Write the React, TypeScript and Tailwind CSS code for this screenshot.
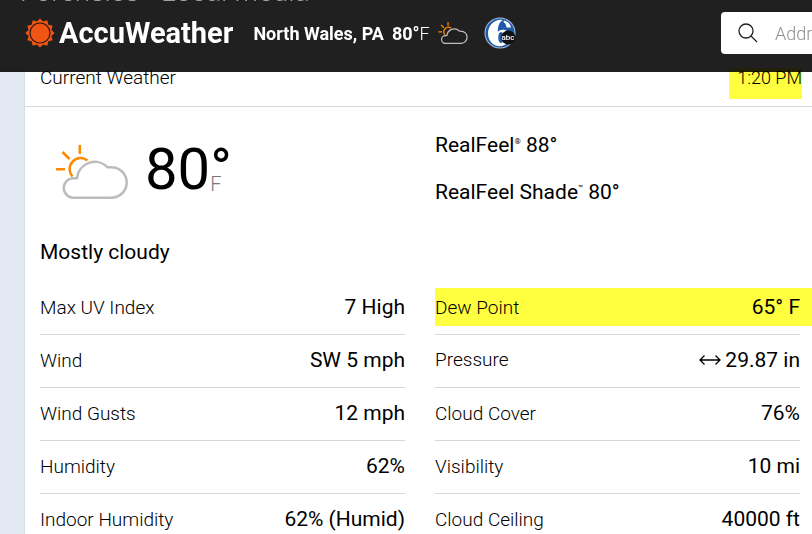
import React from "react";

interface Detail {
  label: string;
  value: string;
  trend?: boolean;
  marked?: boolean;
}

const leftDetails: Detail[] = [
  { label: "Max UV Index", value: "7 High" },
  { label: "Wind", value: "SW 5 mph" },
  { label: "Wind Gusts", value: "12 mph" },
  { label: "Humidity", value: "62%" },
  { label: "Indoor Humidity", value: "62% (Humid)" },
];

const rightDetails: Detail[] = [
  { label: "Dew Point", value: "65° F", marked: true },
  { label: "Pressure", value: "29.87 in", trend: true },
  { label: "Cloud Cover", value: "76%" },
  { label: "Visibility", value: "10 mi" },
  { label: "Cloud Ceiling", value: "40000 ft" },
];

function SunLogo() {
  // twelve points around the disc
  const points = Array.from({ length: 24 }, (_, i) => {
    const r = i % 2 === 0 ? 14.6 : 11.8;
    const a = (i * Math.PI) / 12;
    return `${(15 + r * Math.sin(a)).toFixed(2)},${(15 - r * Math.cos(a)).toFixed(2)}`;
  }).join(" ");
  return (
    <svg viewBox="0 0 30 30" className="size-[30px] shrink-0">
      <polygon points={points} fill="#f05514" />
      <circle cx="15" cy="15" r="10" fill="none" stroke="#2a1a14" strokeWidth="1.2" />
    </svg>
  );
}

function CloudSun({ className, cloud, stroke }: { className: string; cloud: string; stroke: number }) {
  return (
    <svg viewBox="0 0 74 54" className={className} fill="none" strokeWidth={stroke} strokeLinejoin="round">
      <g stroke="#ff8a00">
        <path d="M24.8 0v9M7.500 7l7 7M1 24.300h9" />
        <path d="M17.500 31.500A11 11 0 0 1 32.500 15.500" />
      </g>
      <path
        d="M18.500 52.700H56.500A15.200 15.200 0 0 0 56.500 22.300Q55 22 52.800 22.300A18 18 0 0 0 22 33.300H18.500A9.700 9.700 0 0 0 18.500 52.700Z"
        stroke={cloud}
      />
    </svg>
  );
}

function StationLogo() {
  return (
    <svg viewBox="0 0 32 32" className="size-8 shrink-0">
      <circle cx="16" cy="16" r="15.500" fill="#a9bbd4" />
      <circle cx="16" cy="16" r="14.500" fill="#2059a8" />
      <path
        d="M17 2.800C9 3 4 9.500 4 16.500C4 24 9.500 29.300 16 29.200C21 29.100 25 26 25.500 20C25.800 15 22 12.500 18.500 12.700C16.500 12.800 15 13.500 13.800 14.800C13.800 9.500 15 5 19 3Z"
        fill="#fff"
      />
      <path
        d="M20 3.500C24 4.500 26.500 7 27 10.500L22.500 10.500C22.300 8 21.500 6 19.500 5.200Z"
        fill="#fff"
      />
      <ellipse cx="17" cy="20.500" rx="2.700" ry="5.500" fill="#2059a8" />
      <circle cx="24.300" cy="20.500" r="7" fill="#111" />
      <text x="24" y="23.200" textAnchor="middle" fontSize="8" fontWeight="500" fill="#fff">
        abc
      </text>
    </svg>
  );
}

function DetailList({ items }: { items: Detail[] }) {
  return (
    <dl className="flex-1">
      {items.map((item) => (
        <div
          key={item.label}
          className="relative flex h-[53px] items-baseline justify-between border-b border-[#d8d8d8] pt-[7px] leading-9"
        >
          {item.marked && <span className="absolute top-[6px] left-0 -right-3 h-[38px] bg-[#ffff40]" />}
          <dt className="relative text-[19px] font-light">{item.label}</dt>
          <dd className="relative flex items-center gap-1 text-[21px]">
            {item.trend && (
              <svg viewBox="0 0 22 12" className="w-[22px]" fill="none" stroke="#000" strokeWidth="1.300">
                <path d="M1 6h20M5.500 1.500L1 6l4.500 4.500M16.500 1.500L21 6l-4.500 4.500" />
              </svg>
            )}
            {item.value}
          </dd>
        </div>
      ))}
    </dl>
  );
}

export default function App() {
  return (
    <div className="h-screen overflow-hidden bg-white font-['Roboto',sans-serif] text-black">
      <header className="fixed inset-x-0 top-0 z-10 h-[72px] bg-black/[0.875]">
        <div className="h-1 overflow-hidden">
          <p className="-mt-[22px] pl-5 text-[28px] leading-7 font-light text-[#a0a0a0]">Forensics - Local Media</p>
        </div>
        <div className="flex items-center pt-2 pl-[25px] text-white">
          <a href="#" className="flex items-center gap-1">
            <SunLogo />
            <span className="text-[29px] leading-10 font-bold">AccuWeather</span>
          </a>
          <a href="#" className="ml-5 flex items-center">
            <span className="text-[18px] font-bold">North Wales, PA</span>
            <span className="ml-2 text-[18px] font-bold">80°</span>
            <span className="text-[18px] font-light">F</span>
            <CloudSun className="ml-2 h-[22px] w-[30px]" cloud="#bdbdbd" stroke={3} />
          </a>
          <a href="#" className="ml-4">
            <StationLogo />
          </a>
          <label className="ml-auto flex h-[42px] w-[91px] items-center gap-4 rounded-l bg-white pl-4">
            <svg viewBox="0 0 22 22" className="size-[22px] shrink-0" fill="none" stroke="#222" strokeWidth="1.300">
              <circle cx="9" cy="9" r="7" />
              <path d="M14 14l6 6" />
            </svg>
            <input
              type="text"
              aria-label="Location"
              placeholder="Addr"
              className="w-full min-w-0 text-[18px] font-light text-black outline-none placeholder:text-[#929292]"
            />
          </label>
        </div>
      </header>

      <div className="flex pt-[68px]">
        <div className="min-h-screen w-[25px] shrink-0 border-r border-[#d8dee6] bg-[#e2e9f2]" />
        <main className="flex-1">
          <div className="flex h-[39px] items-start justify-between border-b border-[#d8d8d8] pr-[10px] pl-[15px] text-[19px] leading-5 font-light">
            <h2>Current Weather</h2>
            <p className="h-[31px] bg-[#ffff40] pl-2 text-[18px]">1:20 PM</p>
          </div>

          <div className="pr-3 pl-[15px]">
            <section className="flex gap-[30px] pt-[25px]">
              <div className="flex-1">
                <div className="flex h-[72px] items-start">
                  <CloudSun className="mt-[13px] ml-[15px] h-[54px] w-[74px]" cloud="#bcbcbc" stroke={2.5} />
                  <div className="ml-4 flex text-[58px] leading-[74px]">
                    <span>80</span>
                    <span className="relative">
                      °
                      <span className="absolute bottom-3 left-0 text-[20px] leading-5 font-light text-[#777]">F</span>
                    </span>
                  </div>
                </div>
                <p className="pt-[30px] pb-3 text-[21px] leading-9">Mostly cloudy</p>
              </div>
              <div className="flex flex-1 flex-col gap-[11px] text-[21px] leading-9">
                <p className="-mt-[5px]">
                  RealFeel<span className="align-[8px] text-[8px] leading-none">®</span> 88°
                </p>
                <p>
                  RealFeel Shade<span className="align-[8px] text-[8px] leading-none">™</span> 80°
                </p>
              </div>
            </section>

            <section className="flex gap-[30px]">
              <DetailList items={leftDetails} />
              <DetailList items={rightDetails} />
            </section>
          </div>
        </main>
      </div>
    </div>
  );
}
